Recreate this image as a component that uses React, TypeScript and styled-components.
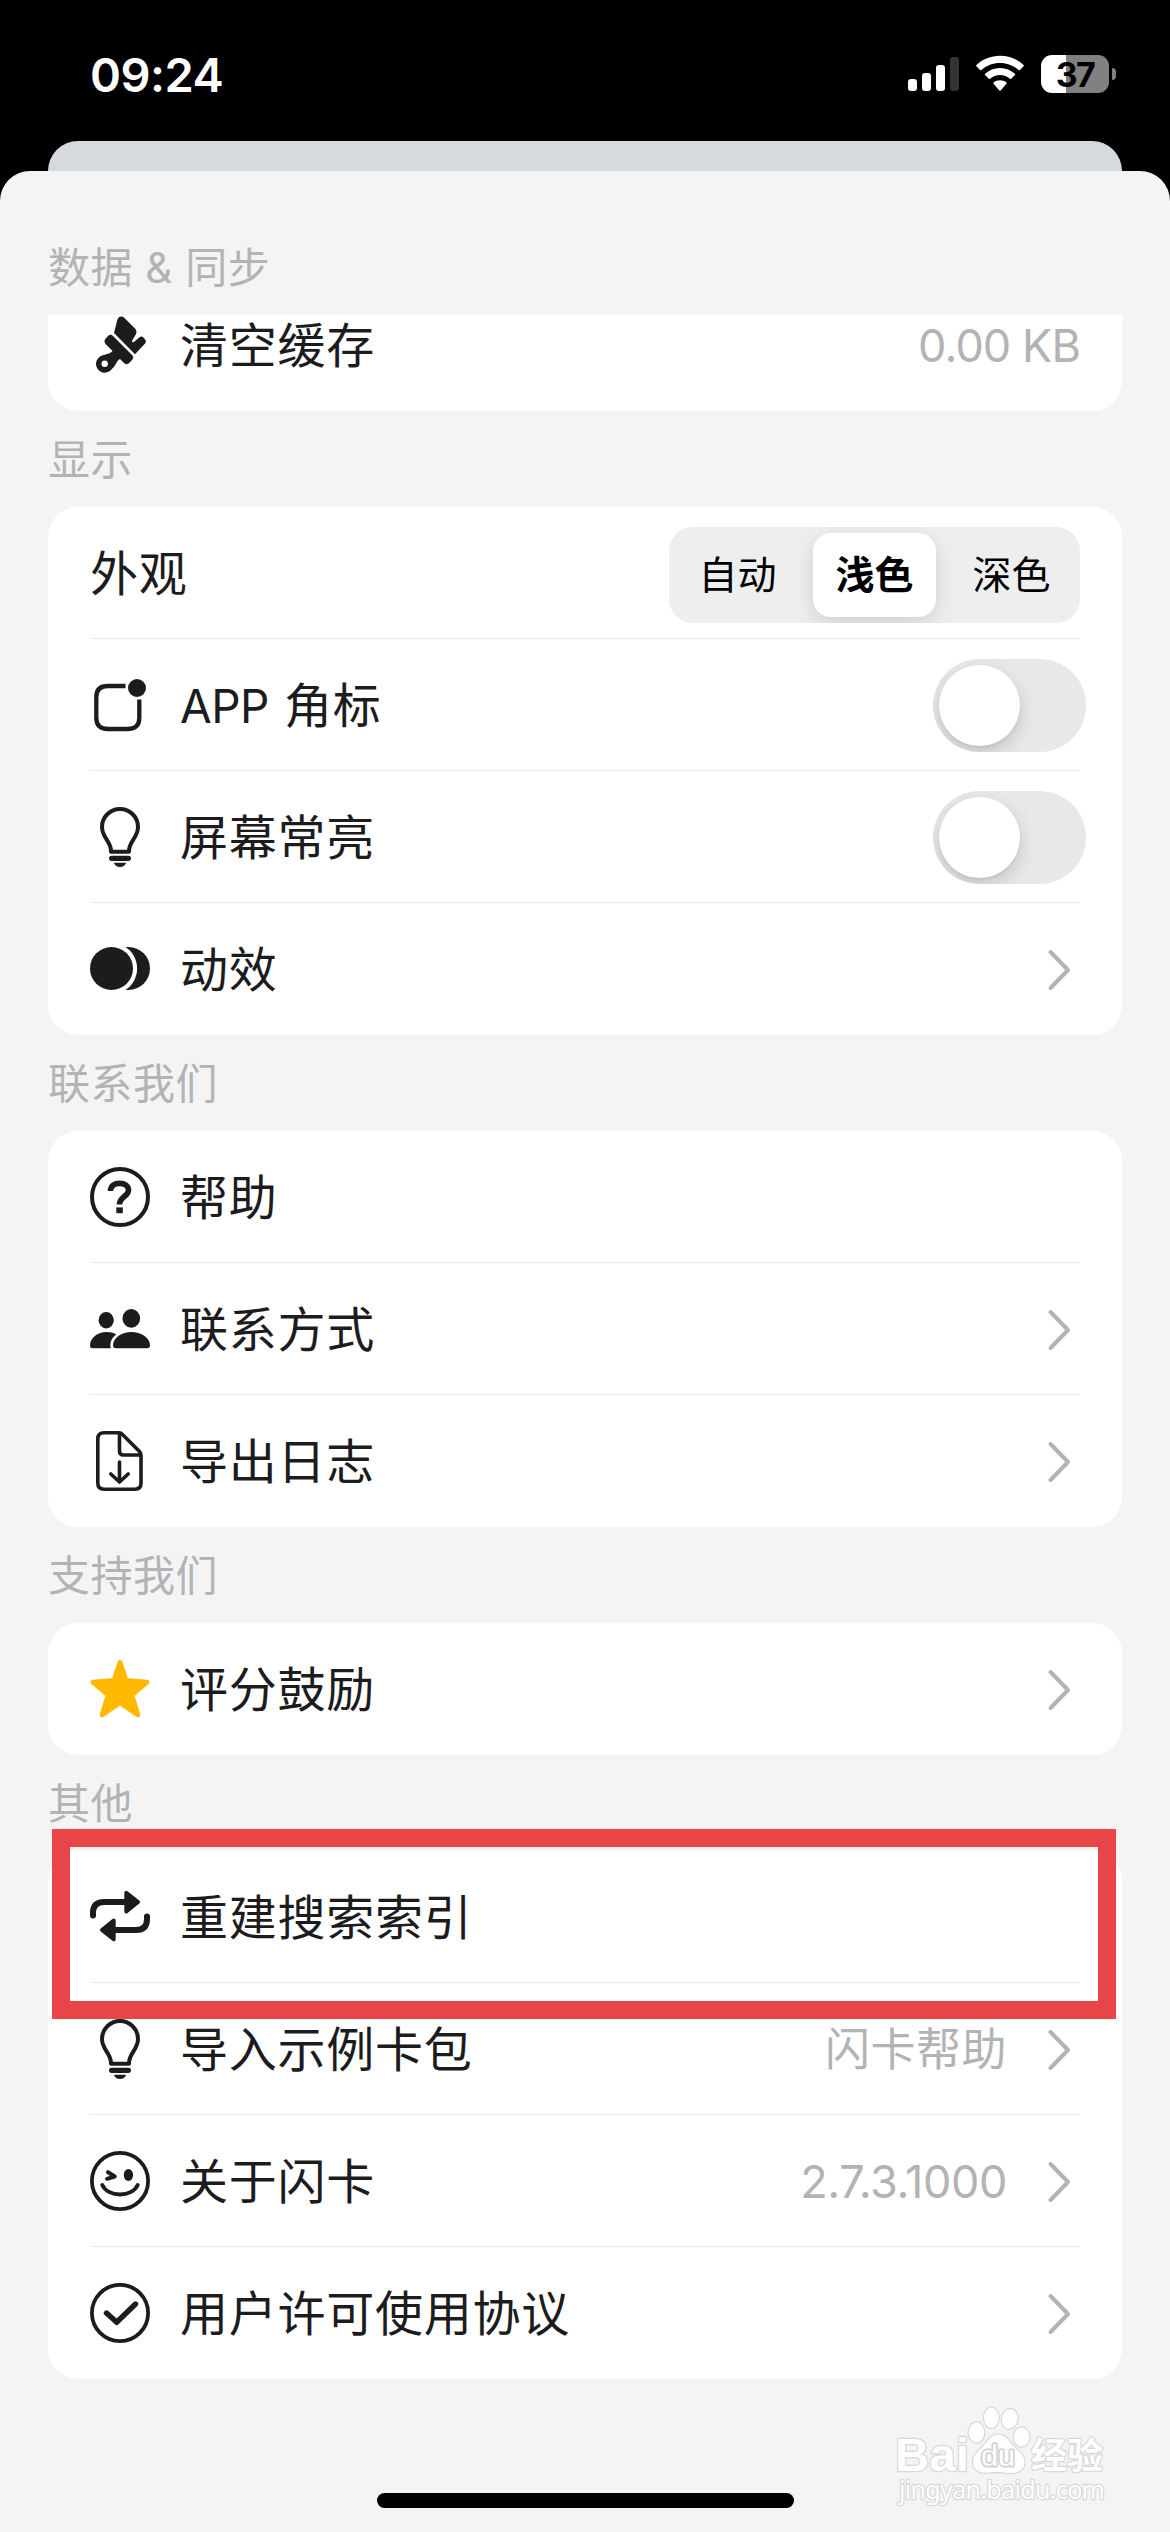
import React from "react";
import styled, { createGlobalStyle, css } from "styled-components";

const INK = "#1c1c1e";
const MUTED = "#b3b3b6";

const GlobalStyle = createGlobalStyle`
  * { box-sizing: border-box; }
  html, body { margin: 0; background: #000; }
  body {
    font-family: Inter, "Noto Sans CJK SC", sans-serif;
    color: ${INK};
  }
`;

const Screen = styled.div`
  position: relative;
  display: flex;
  flex-direction: column;
  width: 1170px;
  height: 2532px;
  overflow: hidden;
  background: #000;
`;

const StatusBar = styled.header`
  display: flex;
  justify-content: space-between;
  height: 141px;
  padding: 55px 54px 0 90px;
  color: #fff;
`;

const Clock = styled.time`
  font-size: 47px;
  font-weight: 570;
  line-height: 39px;
  letter-spacing: -0.5px;
`;

const StatusIcons = styled.div`
  display: flex;
  align-items: flex-start;
  height: 38px;
`;

const Battery = styled.div`
  display: flex;
  align-items: center;
  gap: 3px;
  margin-left: 17px;
`;

const BatteryBody = styled.div`
  display: flex;
  align-items: center;
  justify-content: center;
  width: 68px;
  height: 38px;
  border-radius: 11px;
  background: linear-gradient(90deg, #fff 37%, #808080 37%);
  color: #000;
  font-size: 34px;
  font-weight: 650;
  letter-spacing: -1.5px;
`;

const BatteryTip = styled.div`
  width: 4px;
  height: 12px;
  border-radius: 0 5px 5px 0;
  background: #808080;
`;

const BackSheet = styled.div`
  flex: none;
  height: 30px;
  margin: 0 48px;
  border-radius: 30px 30px 0 0;
  background: #d6d9dd;
`;

const Sheet = styled.main`
  display: flex;
  flex: 1;
  flex-direction: column;
  padding: 48px 48px 0;
  border-radius: 30px 30px 0 0;
  background: #f4f4f4;
`;

const SectionTitle = styled.h2`
  display: flex;
  align-items: center;
  height: 96px;
  margin: 0;
  padding: 1px 0 0;
  color: ${MUTED};
  font-size: 42px;
  font-weight: 400;
  line-height: 60px;
  letter-spacing: 0.5px;
  white-space: pre;
`;

const ScrollArea = styled.div`
  overflow: hidden;
`;

const Card = styled.section<{ $scrolled?: boolean }>`
  padding: 0 42px;
  border-radius: 30px;
  background: #fff;
  ${(p) => p.$scrolled && css`margin-top: -36px;`}
`;

const Row = styled.div`
  display: flex;
  align-items: center;
  height: 132px;
  border-bottom: 1px solid #ebebed;
  &:last-child { border-bottom-color: transparent; }
`;

const IconSlot = styled.span`
  display: flex;
  flex: none;
  width: 60px;
  height: 60px;
  margin-right: 30px;
`;

const Label = styled.span`
  flex: 1;
  padding-top: 2px;
  font-size: 48px;
  line-height: 66px;
  letter-spacing: 0.75px;
  white-space: nowrap;
`;

const Latin = styled.span`
  font-size: 46px;
  letter-spacing: -0.6px;
  word-spacing: 3px;
`;

const Value = styled.span<{ $beforeChevron?: boolean; $latin: boolean }>`
  margin-right: ${(p) => (p.$beforeChevron ? 40 : 0)}px;
  padding-top: 2px;
  color: ${MUTED};
  font-size: 45px;
  line-height: 60px;
  letter-spacing: ${(p) => (p.$latin ? (p.$beforeChevron ? -0.4 : -0.9) : 0.5)}px;
  white-space: nowrap;
`;

const Segments = styled.div`
  display: flex;
  width: 411px;
  height: 96px;
  margin-top: 4px;
  padding: 6px 0;
  border-radius: 24px;
  overflow: hidden;
  background: #eeeeef;
`;

const Segment = styled.button<{ $active?: boolean }>`
  display: flex;
  flex: 1;
  align-items: center;
  justify-content: center;
  margin: 0 7px;
  padding: 1px 0 0;
  border: 0;
  border-radius: 18px;
  background: transparent;
  color: #000;
  font: 400 39px/56px Inter, "Noto Sans CJK SC", sans-serif;
  ${(p) =>
    p.$active &&
    css`
      background: #fff;
      font-weight: 600;
      box-shadow: 0 6px 20px rgba(0, 0, 0, 0.13);
    `}
`;

const Toggle = styled.button`
  width: 153px;
  height: 93px;
  margin: 1px -6px 0 0;
  padding: 6px;
  border: 0;
  border-radius: 47px;
  overflow: hidden;
  background: #e8e8ea;
`;

const Knob = styled.span`
  display: block;
  width: 81px;
  height: 81px;
  border-radius: 50%;
  background: #fff;
  box-shadow: 0 7px 18px rgba(0, 0, 0, 0.16), 0 2px 3px rgba(0, 0, 0, 0.05);
`;

const ChevronSvg = styled.svg`
  flex: none;
  width: 24px;
  height: 42px;
  margin: 2px 9px 0 0;
`;

const Highlight = styled.div`
  position: absolute;
  left: 52px;
  top: 1829px;
  width: 1064px;
  height: 190px;
  border: 18px solid #e84549;
`;

const HomeIndicator = styled.div`
  position: absolute;
  left: 377px;
  top: 2493px;
  width: 417px;
  height: 15px;
  border-radius: 8px;
  background: #000;
`;

const Watermark = styled.svg`
  position: absolute;
  left: 890px;
  top: 2400px;
`;

const Signal = () => (
  <svg width="51" height="38" fill="#fff">
    <rect x="0" y="24" width="9" height="12" rx="3" />
    <rect x="14" y="18" width="9" height="18" rx="3" />
    <rect x="28" y="10" width="9" height="26" rx="3" />
    <rect x="42" y="2" width="9" height="34" rx="3" fill="#333" />
  </svg>
);

const WifiSvg = styled.svg`
  margin-left: 17px;
`;

const Wifi = () => (
  <WifiSvg width="48" height="38" viewBox="0 0 48 38" fill="#fff">
    <path d="M24 .7C33 .7 41.500 4.200 47.600 9.900Q48.200 10.500 47.600 11.200L43.900 15Q43.300 15.600 42.600 15C37.600 10.500 31.100 7.900 24 7.900S10.400 10.500 5.400 15Q4.700 15.600 4.100 15L.4 11.200Q-.2 10.500.4 9.900C6.500 4.200 15 .7 24 .7Z" />
    <path d="M24 12.900C29.800 12.900 35 15.100 39 18.700Q39.600 19.300 39 20L35.200 23.800Q34.600 24.400 33.900 23.800C31.300 21.500 27.800 20.100 24 20.100S16.700 21.500 14.100 23.800Q13.400 24.400 12.800 23.800L9 20Q8.400 19.300 9 18.700C13 15.100 18.200 12.900 24 12.900Z" />
    <path d="M24 25.200C26.500 25.200 28.700 26.100 30.400 27.500Q31 28.100 30.400 28.800L24.700 35.400Q24 36.100 23.300 35.400L17.600 28.800Q17 28.100 17.600 27.500C19.300 26.100 21.500 25.200 24 25.200Z" />
  </WifiSvg>
);

const Chevron = () => (
  <ChevronSvg viewBox="0 0 24 42">
    <path d="M3.500 3 21 21 3.500 39" fill="none" stroke={MUTED} strokeWidth="4" strokeLinecap="round" strokeLinejoin="round" />
  </ChevronSvg>
);

const icons = {
  brush: (
    <g fill={INK}>
      <path d="M27.300 5C28.500 1.300 32 .6 34.500 3L45 13.500C47 15.500 46.800 17.500 45.500 20L42.200 25.500C41.500 27.300 42.800 27.600 44.500 26.500L49.500 22.300C51 21 52.300 21.300 53.400 22.500L55.500 25Q56.500 26.700 55.300 28.300L45 39.200 24 18Z" />
      <path d="M17.500 21.500C19.300 19.700 21.200 19.200 23 21L42.300 40.300C43.700 41.700 43.500 43.200 42.200 44.700L39.500 47.800C37.500 50 35.500 49.500 33.500 47.500L30 44C26.500 45.500 25.500 51.500 22.300 53.500A8.800 8.800 0 1 1 10.500 41.200C14.500 39.500 20.500 39 22.500 36L15.800 29.200C14 27.400 14.200 25.200 15.500 23.700ZM14.700 45.500A3.200 3.200 0 1 0 14.700 51.900 3.200 3.200 0 1 0 14.700 45.500Z" fillRule="evenodd" />
    </g>
  ),
  badge: (
    <>
      <path d="M35.500 11H18C10 11 6.300 14.500 6.300 22V43C6.300 50.500 10 54 18 54H37.500C45.500 54 49.300 50.500 49.300 43V24.500" fill="none" stroke={INK} strokeWidth="4.300" />
      <circle cx="47" cy="13" r="9" fill={INK} />
    </>
  ),
  bulb: (
    <>
      <path d="M21 44.700C21.500 34.500 12 31 12 20A18 18 0 0 1 48 20C48 31 38.500 34.500 39 44.700Z" fill="none" stroke={INK} strokeWidth="4" strokeLinejoin="round" />
      <rect x="19" y="48.700" width="22" height="5.200" rx="2.600" fill={INK} />
      <path d="M23.800 55.800H36.200C35 58.700 33 60 30 60S25 58.700 23.800 55.800Z" fill={INK} />
    </>
  ),
  motion: (
    <g fill={INK}>
      <circle cx="21.500" cy="29.500" r="21.500" />
      <path d="M35.500 8H38.500A21.500 21.500 0 0 1 38.500 51H35.500A25.700 25.700 0 0 0 35.500 8Z" />
    </g>
  ),
  help: (
    <g fill="none" stroke={INK}>
      <circle cx="30" cy="30" r="28" strokeWidth="4" />
      <path d="M20.500 24C20.500 18.800 24.500 16.400 29.500 16.400 35 16.400 38.500 19 38.500 23.200 38.500 29.500 29.500 29.800 29.500 37.500" strokeWidth="5.600" />
      <path d="M26.300 43.300H32.800" strokeWidth="5.800" />
    </g>
  ),
  people: (
    <g fill={INK}>
      <ellipse cx="16.200" cy="21.200" rx="7.600" ry="8.200" />
      <ellipse cx="41.300" cy="19.400" rx="8.800" ry="9.400" />
      <path d="M41.300 33C51 33 60 38.500 60 46.500Q60 49.300 57 49.300H26Q23 49.300 23 46.500C23 38.500 32 33 41.300 33Z" />
      <path d="M16.500 33Q22.500 33 26.300 35.300C22.300 38.300 20.300 42 20.300 46.500Q20.300 48.200 21 49.300H2.500Q0 49.300 0 46.500C0 39 7.500 33 16.500 33Z" />
    </g>
  ),
  exportFile: (
    <g fill="none" stroke={INK} strokeWidth="3.600" strokeLinecap="round" strokeLinejoin="round">
      <path d="M14 1.800H29Q31 1.800 32.500 3.500L49.500 20.500Q51 22 51 24V52Q51 58.200 45 58.200H14Q7.800 58.200 7.800 52V8Q7.800 1.800 14 1.800Z" />
      <path d="M29.500 2.500V20Q29.500 24 33.500 24H50" />
      <path d="M29.500 31V50.500M20.800 43 29.500 51 38.200 43" />
    </g>
  ),
  star: (
    <path d="M30 3.500 36 21.600 57 23.200 41.700 36 47.800 55.800 30 43.800 12.200 55.800 18.300 36 3 23.200 24 21.600Z" fill="#ffb900" stroke="#ffb900" strokeWidth="5" strokeLinejoin="round" />
  ),
  repeat: (
    <g fill={INK} stroke={INK} strokeLinejoin="round" strokeLinecap="round">
      <path d="M3 28.500V26C3 18.500 7 15 14 15H36M57 29.500V32C57 39.500 53 43 46 43H24" fill="none" strokeWidth="6" />
      <path d="M36.300 5.800 48 15 36.300 24.500ZM23.700 33.500 12 43 23.700 52.200Z" strokeWidth="4" />
    </g>
  ),
  smile: (
    <g fill="none" stroke={INK} strokeLinecap="round" strokeLinejoin="round">
      <circle cx="30" cy="30" r="28.100" strokeWidth="3.800" />
      <path d="M18 21.200 24.800 25.500 17 27.800" strokeWidth="4" />
      <path d="M12.300 34C18 46.500 42 46.500 47.700 34" strokeWidth="4" />
      <ellipse cx="38.400" cy="24" rx="4.700" ry="6" fill={INK} stroke="none" />
    </g>
  ),
  check: (
    <g fill="none" stroke={INK} strokeLinecap="round" strokeLinejoin="round">
      <circle cx="30" cy="30" r="28.100" strokeWidth="3.800" />
      <path d="M16.500 30 26.700 39.300 45.500 21" strokeWidth="5.400" />
    </g>
  ),
};

type IconName = keyof typeof icons;

const Icon = ({ name }: { name: IconName }) => (
  <IconSlot>
    <svg width="60" height="60" viewBox="0 0 60 60">{icons[name]}</svg>
  </IconSlot>
);

interface ItemProps {
  icon?: IconName;
  label: React.ReactNode;
  value?: string;
  chevron?: boolean;
  children?: React.ReactNode;
}

const Item = ({ icon, label, value, chevron, children }: ItemProps) => (
  <Row>
    {icon && <Icon name={icon} />}
    <Label>{label}</Label>
    {value && (
      <Value $beforeChevron={chevron} $latin={/^[\x20-\x7e]+$/.test(value)}>
        {value}
      </Value>
    )}
    {children}
    {chevron && <Chevron />}
  </Row>
);

const Switch = () => (
  <Toggle role="switch" aria-checked="false">
    <Knob />
  </Toggle>
);

const BaiduMark = () => (
  <Watermark width="230" height="115" viewBox="0 0 230 115">
    <g fill="#fefefe" stroke="#d8d8d8" strokeWidth="2.400" strokeLinejoin="round" paintOrder="stroke">
      <text x="5" y="70.500" fontFamily="Liberation Sans, sans-serif" fontSize="46" fontWeight="700" textLength="74" lengthAdjust="spacingAndGlyphs">Bai</text>
      <ellipse cx="86.500" cy="32.500" rx="7.800" ry="10" />
      <ellipse cx="101.300" cy="17.800" rx="7.300" ry="10.300" />
      <ellipse cx="119.700" cy="19" rx="7.800" ry="9.900" transform="rotate(10 119.700 19)" />
      <ellipse cx="131.500" cy="37" rx="7.800" ry="9.500" />
      <path d="M108.500 34.500C115 34.500 118.500 40 122 44.500 127 50.500 134.500 54 134.500 62 134.500 70.500 127 73.500 120 73 113 72.500 106 71.500 100 72.500 91 74 83 71 83 61.500 83 54 90 50.500 94.500 45 98 40.500 101.500 34.500 108.500 34.500Z" />
      <text x="91" y="66" fontFamily="Liberation Sans, sans-serif" fontSize="29" fontWeight="400" stroke="#d0d0d0" strokeWidth="3.200" textLength="34" lengthAdjust="spacingAndGlyphs">du</text>
      <text x="141" y="68.500" fontFamily="Noto Sans CJK SC, sans-serif" fontSize="36" fontWeight="700" textLength="72">经验</text>
      <text x="9" y="99" fontFamily="Noto Sans, sans-serif" fontSize="25" textLength="206">jingyan.baidu.com</text>
    </g>
  </Watermark>
);

export default function App() {
  return (
    <Screen>
      <GlobalStyle />
      <StatusBar>
        <Clock>09:24</Clock>
        <StatusIcons>
          <Signal />
          <Wifi />
          <Battery>
            <BatteryBody>37</BatteryBody>
            <BatteryTip />
          </Battery>
        </StatusIcons>
      </StatusBar>
      <BackSheet />
      <Sheet>
        <SectionTitle>数据 &amp; 同步</SectionTitle>
        <ScrollArea>
          <Card $scrolled>
            <Item icon="brush" label="清空缓存" value="0.00 KB" />
          </Card>
          <SectionTitle>显示</SectionTitle>
          <Card>
            <Item label="外观">
              <Segments>
                <Segment>自动</Segment>
                <Segment $active>浅色</Segment>
                <Segment>深色</Segment>
              </Segments>
            </Item>
            <Item icon="badge" label={<><Latin>APP </Latin>角标</>}><Switch /></Item>
            <Item icon="bulb" label="屏幕常亮"><Switch /></Item>
            <Item icon="motion" label="动效" chevron />
          </Card>
          <SectionTitle>联系我们</SectionTitle>
          <Card>
            <Item icon="help" label="帮助" />
            <Item icon="people" label="联系方式" chevron />
            <Item icon="exportFile" label="导出日志" chevron />
          </Card>
          <SectionTitle>支持我们</SectionTitle>
          <Card>
            <Item icon="star" label="评分鼓励" chevron />
          </Card>
          <SectionTitle>其他</SectionTitle>
          <Card>
            <Item icon="repeat" label="重建搜索索引" />
            <Item icon="bulb" label="导入示例卡包" value="闪卡帮助" chevron />
            <Item icon="smile" label="关于闪卡" value="2.7.3.1000" chevron />
            <Item icon="check" label="用户许可使用协议" chevron />
          </Card>
        </ScrollArea>
      </Sheet>
      <Highlight />
      <HomeIndicator />
      <BaiduMark />
    </Screen>
  );
}
